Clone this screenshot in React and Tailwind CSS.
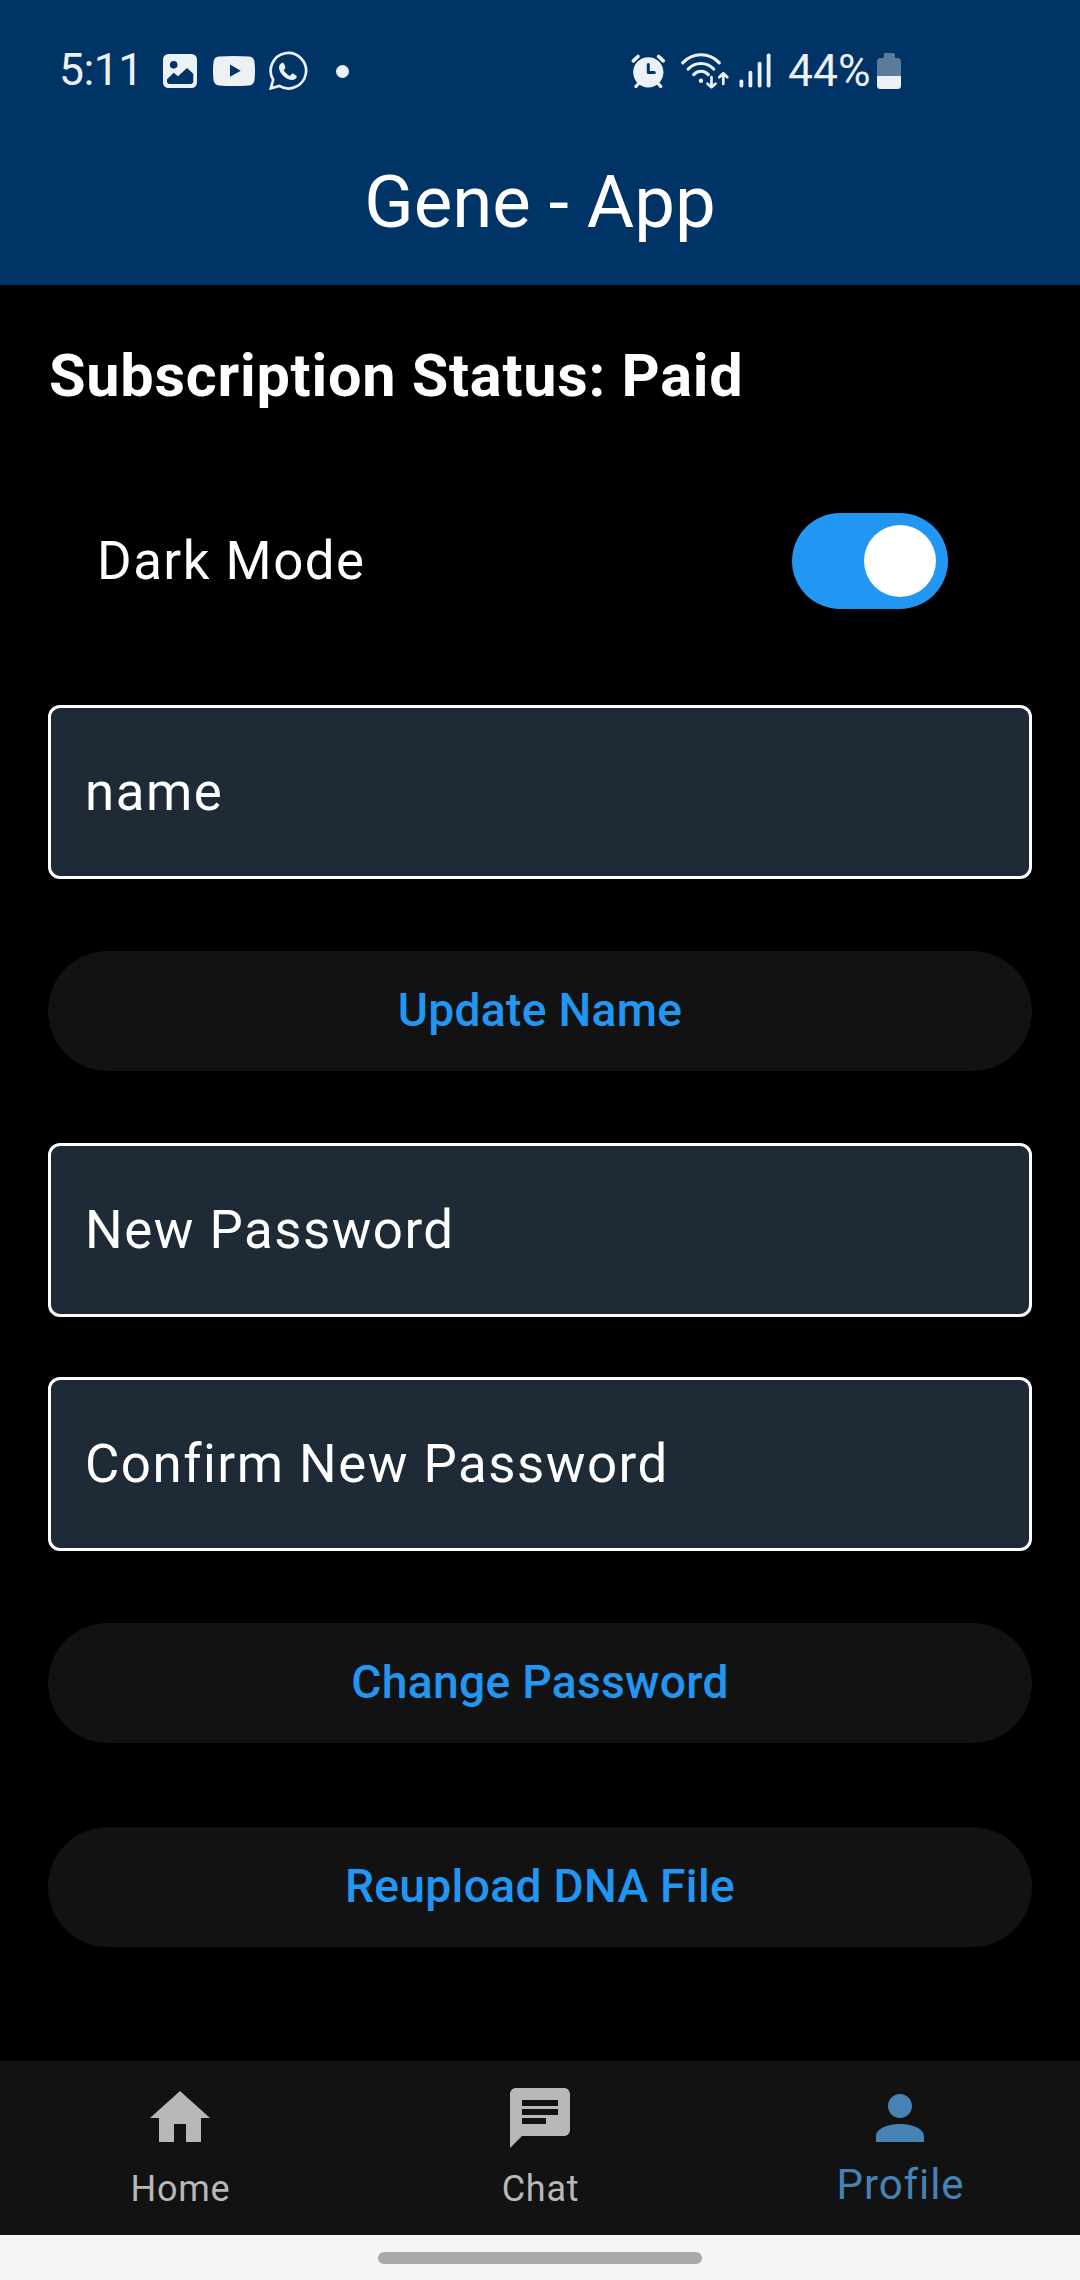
const INK = "#ecf1f5";
const NAVY = "#003366";

function GalleryIcon() {
  return (
    <svg className="ml-[25px] h-[34px] w-[34px]" viewBox="0 0 34 34">
      <rect width="34" height="34" rx="5.5" fill={INK} />
      <circle cx="10.7" cy="10.7" r="3.8" fill={NAVY} />
      <path d="M4 25.3 10.7 18.7 15 22.3 24 14l6.3 5.7v7.6a2.7 2.7 0 0 1-2.7 2.7H6.7A2.7 2.7 0 0 1 4 27.3z" fill={NAVY} />
    </svg>
  );
}

function VideoIcon() {
  return (
    <svg className="ml-4 h-[30px] w-[42px]" viewBox="0 0 42 30">
      <path d="M6 .6Q21-.6 36 .6 41 1 41.5 6q1 9 0 18-.5 5-5.5 5.4-15 1.2-30 0Q1 29 .5 24q-1-9 0-18Q1 1 6 .6z" fill={INK} />
      <path d="M17 8.5 27.7 14.7 17 20.7z" fill={NAVY} />
    </svg>
  );
}

function WhatsAppIcon() {
  return (
    <svg className="ml-[13px] h-10 w-10" viewBox="0 0 40 40">
      <path d="M2.9 37.2 5.2 28.8A17.7 17.7 0 1 1 11.3 34.9z" fill="none" stroke={INK} strokeWidth="2.7" strokeLinejoin="miter" />
      <path d="M15 11.7C13.5 11.400 11 13.700 11 16.400 11 22.400 18.500 29 24 29 27 29 28.900 27.100 28.700 25.300 28.600 24.500 24.800 22.600 24.300 22.600 23.500 22.600 22.700 24.900 22 24.900 21 24.900 16.300 21.100 15.800 19.300 15.700 18.500 17.500 17.500 17.500 16.500 17.300 15.500 16 11.800 15 11.700z" fill={INK} />
    </svg>
  );
}

function AlarmIcon() {
  return (
    <svg className="h-[38px] w-9" viewBox="0 0 36 38" fill="none" stroke={INK} strokeLinecap="round">
      <circle cx="18.3" cy="20.3" r="15.1" fill={INK} stroke="none" />
      <path d="M3.3 8.8 8 4.5M28.6 4.5 33.3 8.8" strokeWidth="3.6" />
      <path d="M8.5 31.5 6 34.5M28.2 31.5 30.7 34.5" strokeWidth="3.4" />
      <path d="M18.3 12.5V20.5H24.3" stroke={NAVY} strokeWidth="3" strokeLinejoin="round" />
    </svg>
  );
}

function WifiIcon() {
  return (
    <svg className="ml-[14px] h-[38px] w-[50px]" viewBox="0 0 50 38" fill="none" stroke={INK} strokeWidth="3.2" strokeLinecap="round" strokeLinejoin="round">
      <path d="M2.7 10.8A24.8 24.8 0 0 1 39.3 10.8M8.2 17A17.5 17.5 0 0 1 33.7 17M13.7 22.6A9.6 9.6 0 0 1 28.3 22.6" />
      <circle cx="21" cy="28.7" r="2.2" fill={INK} stroke="none" />
      <path d="M31.5 25V35.2M27.5 31.7 31.5 35.3 35.5 31.7M43.3 32V21.3M39.3 25.3 43.3 21.3 47.3 25.3" strokeWidth="2.7" />
    </svg>
  );
}

function SignalIcon() {
  return (
    <svg className="ml-2 h-[38px] w-[34px]" viewBox="0 0 34 38" fill={INK}>
      <rect x="1.5" y="27.6" width="3.8" height="7.8" rx="1.7" />
      <rect x="10.5" y="18.7" width="3.8" height="16.7" rx="1.7" />
      <rect x="19.7" y="9.7" width="3.8" height="25.7" rx="1.7" />
      <rect x="28.7" y="1.6" width="3.8" height="33.8" rx="1.7" />
    </svg>
  );
}

function BatteryIcon() {
  return (
    <svg className="ml-[7px] h-9 w-6" viewBox="0 0 24 36">
      <path d="M6.7 5V2Q6.7 0 8.7 0H16Q18 0 18 2V5H20.5Q24 5 24 8.5V23H0V8.5Q0 5 3.5 5z" fill="#5a7b9c" />
      <path d="M0 23H24V32.5Q24 36 20.5 36H3.5Q0 36 0 32.5z" fill={INK} />
    </svg>
  );
}

function StatusBar() {
  return (
    <div className="flex h-[142px] items-center text-[44.5px] leading-none text-[#ecf1f5]">
      <div className="flex w-[630px] shrink-0 items-center pl-[59px]">
        <span className="w-[79px] pb-px tracking-[-0.5px] whitespace-nowrap">5:11</span>
        <GalleryIcon />
        <VideoIcon />
        <WhatsAppIcon />
        <div className="ml-7 h-[13px] w-[13px] rounded-full bg-[#ecf1f5]" />
      </div>
      <AlarmIcon />
      <WifiIcon />
      <SignalIcon />
      <span className="ml-4 w-[82px] whitespace-nowrap">44%</span>
      <BatteryIcon />
    </div>
  );
}

function Field({ label }) {
  return (
    <div className="flex h-[174px] shrink-0 items-center rounded-xl border-3 border-white bg-[#1f2a37] pt-0.5 pl-[34px] text-[52.8px] tracking-[1.5px] text-white">
      {label}
    </div>
  );
}

function PillButton({ children }) {
  return (
    <button className="flex h-[120px] w-full shrink-0 items-center justify-center rounded-full bg-[#121212] text-[46.2px] font-medium tracking-[0.3px] text-[#2196f3]">
      {children}
    </button>
  );
}

const TABS = [
  { label: "Home", d: "M10 20v-6h4v6h5v-8h3L12 3 2 12h3v8z" },
  {
    label: "Chat",
    d: "M20 2H4c-1.1 0-2 .9-2 2v18l4-4h14c1.1 0 2-.9 2-2V4c0-1.1-.9-2-2-2zM6 9h12v2H6V9zm8 5H6v-2h8v2zm4-6H6V6h12v2z",
  },
  {
    label: "Profile",
    active: true,
    d: "M12 12c2.21 0 4-1.79 4-4s-1.79-4-4-4-4 1.79-4 4 1.79 4 4 4zm0 2c-4.42 0-8 1.79-8 4v2h16v-2c0-2.21-3.58-4-8-4z",
  },
];

function Tab({ label, d, active }) {
  return (
    <div className={active ? "flex flex-1 flex-col items-center pt-[21px] text-[#4682b4]" : "flex flex-1 flex-col items-center pt-[21px] text-[#b8b8b8]"}>
      <svg className="h-[72px] w-[72px]" viewBox="0 0 24 24" fill="currentColor">
        <path d={d} />
      </svg>
      <span className={active ? "mt-px pl-px text-[42px] leading-[60px] tracking-[0.9px]" : "mt-[5px] pl-px text-[36px] leading-[60px] tracking-[0.75px]"}>{label}</span>
    </div>
  );
}

export default function App() {
  return (
    <div className="flex h-[2280px] w-[1080px] flex-col overflow-hidden bg-black font-[Roboto,sans-serif]">
      <header className="h-[285px] shrink-0 bg-[#003366]">
        <StatusBar />
        <h1 className="text-center text-[72.6px] leading-[121px] text-white">Gene - App</h1>
      </header>

      <main className="flex flex-1 flex-col px-12 pt-[46px]">
        <h2 className="pl-px text-[59.4px] leading-[90px] font-bold tracking-[0.75px] text-white">Subscription Status: Paid</h2>
        <div className="mt-[92px] flex h-24 items-center justify-between pr-[84px] pl-[49px]">
          <span className="pt-0.5 text-[52.8px] tracking-[1.5px] text-white">Dark Mode</span>
          <div className="flex h-24 w-[156px] items-center justify-end rounded-full bg-[#2196f3] p-3">
            <div className="h-[72px] w-[72px] rounded-full bg-white" />
          </div>
        </div>
        <div className="mt-24 flex flex-col">
          <Field label="name" />
          <div className="my-[72px]">
            <PillButton>Update Name</PillButton>
          </div>
          <div className="flex flex-col gap-[60px]">
            <Field label="New Password" />
            <Field label="Confirm New Password" />
          </div>
          <div className="mt-[72px] flex flex-col gap-[84px]">
            <PillButton>Change Password</PillButton>
            <PillButton>Reupload DNA File</PillButton>
          </div>
        </div>
      </main>

      <nav className="flex h-[174px] shrink-0 bg-[#121212]">
        {TABS.map((tab) => (
          <Tab key={tab.label} {...tab} />
        ))}
      </nav>
      <div className="flex h-[45px] shrink-0 justify-center bg-[#f5f5f5] pt-[17px]">
        <div className="h-3 w-[324px] rounded-full bg-[#a9a9a9]" />
      </div>
    </div>
  );
}
